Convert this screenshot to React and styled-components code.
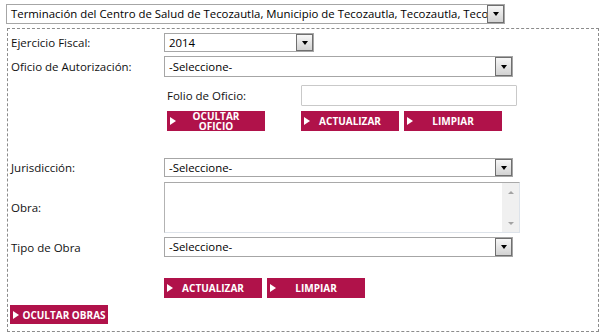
import React from "react";
import styled, { createGlobalStyle } from "styled-components";

const Global = createGlobalStyle`
  html, body { margin: 0; padding: 0; background: #fff; }
  body { font-family: "Open Sans", "Noto Sans", "DejaVu Sans", sans-serif; color: #111; }
  * { box-sizing: border-box; }
`;

const Page = styled.div`
  width: 604px;
  height: 336px;
  padding: 4px 0 0 6px;
  overflow: hidden;
`;

const SelectBox = styled.div`
  display: flex;
  align-items: stretch;
  width: ${(p) => p.$w}px;
  height: ${(p) => p.$h}px;
  border: 1px solid #a6a6a6;
  background: #fff;
  flex: none;
`;

const SelectValue = styled.div`
  flex: 1;
  min-width: 0;
  overflow: hidden;
  white-space: nowrap;
  padding-left: 4px;
  font-size: 11.4px;
  line-height: ${(p) => p.$h - 2}px;
  color: #000;
`;

const ArrowBox = styled.div`
  width: 17px;
  flex: none;
  border: 1px solid #6f6f6f;
  background: linear-gradient(#f7f7f7, #d2d2d2);
  display: flex;
  align-items: center;
  justify-content: center;
  &::after {
    content: "";
    width: 0;
    height: 0;
    border-left: 3.5px solid transparent;
    border-right: 3.5px solid transparent;
    border-top: 4px solid #000;
  }
`;

const Select = ({ value, w, h }) => (
  <SelectBox $w={w} $h={h}>
    <SelectValue $h={h}>{value}</SelectValue>
    <ArrowBox />
  </SelectBox>
);

const Frame = styled.div`
  margin: 4px 0 0 1px;
  width: 592px;
  height: 304px;
  border: 1px dashed #8c8c8c;
  padding: 0 0 0 3px;
  display: flex;
  flex-direction: column;
`;

const Row = styled.div`
  display: flex;
  align-items: center;
  margin-top: ${(p) => p.$mt}px;
  margin-left: ${(p) => p.$ml || 0}px;
  gap: ${(p) => p.$gap || 0}px;
`;

const Label = styled.div`
  width: ${(p) => p.$w || 153}px;
  flex: none;
  font-size: 11.5px;
  color: #111;
  white-space: nowrap;
`;

const TextInput = styled.div`
  width: 216px;
  height: 21px;
  border: 1px solid #c9c9c9;
  border-radius: 1px;
  background: #fff;
`;

const Area = styled.div`
  width: 356px;
  height: 51px;
  display: flex;
  border-top: 1px solid #a9a9a9;
  border-left: 1px solid #b3b3b3;
  border-right: 1px solid #dde3ea;
  border-bottom: 1px solid #dde3ea;
  background: #fff;
`;

const AreaBody = styled.div`
  flex: 1;
`;

const Scroll = styled.div`
  width: 17px;
  background: #f0f0f0;
  display: flex;
  flex-direction: column;
  justify-content: space-between;
  align-items: center;
  padding: 8px 0 7px;
`;

const ScrollArrow = styled.span`
  width: 0;
  height: 0;
  border-left: 3px solid transparent;
  border-right: 3px solid transparent;
  ${(p) => (p.$up ? "border-bottom: 3px solid #a3a3a3;" : "border-top: 3px solid #a3a3a3;")}
`;

const Button = styled.div`
  width: 98px;
  height: ${(p) => p.$h || 20}px;
  flex: none;
  background: #b0124a;
  color: #fff;
  display: grid;
  grid-template-columns: 14px minmax(0, 1fr) ${(p) => p.$end ?? 14}px;
  align-items: center;
  font-weight: 700;
  font-size: 10px;
  line-height: 10px;
  text-transform: uppercase;
  text-align: center;
`;

const BtnText = styled.span`
  justify-self: center;
  white-space: nowrap;
`;

const Tri = styled.span`
  margin-left: 3px;
  width: 0;
  height: 0;
  border-left: 6px solid #fff;
  border-top: 4.5px solid transparent;
  border-bottom: 4.5px solid transparent;
`;

const Btn = ({ children, end, h }) => (
  <Button $end={end} $h={h}>
    <Tri />
    <BtnText>{children}</BtnText>
    <span />
  </Button>
);

const Sub = styled.div`
  margin-left: 156px;
  display: flex;
  flex-direction: column;
`;

const Spacer = styled.div`
  width: ${(p) => p.$w}px;
  flex: none;
`;

export default function App() {
  return (
    <>
      <Global />
      <Page>
        <Select
          w={499}
          h={20}
          value="Terminación del Centro de Salud de Tecozautla, Municipio de Tecozautla, Tecozautla, Tecozautla, Hidalgo"
        />
        <Frame>
          <Row $mt={4}>
            <Label>Ejercicio Fiscal:</Label>
            <Select w={150} h={19} value="2014" />
          </Row>
          <Row $mt={4}>
            <Label>Oficio de Autorización:</Label>
            <Select w={349} h={21} value="-Seleccione-" />
          </Row>
          <Sub>
            <Row $mt={8}>
              <Label $w={134}>Folio de Oficio:</Label>
              <TextInput />
            </Row>
            <Row $mt={5}>
              <Btn>Ocultar<br />Oficio</Btn>
              <Spacer $w={36} />
              <Btn>Actualizar</Btn>
              <Spacer $w={5} />
              <Btn>Limpiar</Btn>
            </Row>
          </Sub>
          <Row $mt={27}>
            <Label>Jurisdicción:</Label>
            <Select w={349} h={19} value="-Seleccione-" />
          </Row>
          <Row $mt={5}>
            <Label>Obra:</Label>
            <Area>
              <AreaBody />
              <Scroll>
                <ScrollArrow $up />
                <ScrollArrow />
              </Scroll>
            </Area>
          </Row>
          <Row $mt={4}>
            <Label>Tipo de Obra</Label>
            <Select w={349} h={20} value="-Seleccione-" />
          </Row>
          <Row $mt={21} $ml={153} $gap={5}>
            <Btn>Actualizar</Btn>
            <Btn>Limpiar</Btn>
          </Row>
          <Row $mt={7} $ml={-1}>
            <Btn end={4} h={19}>Ocultar Obras</Btn>
          </Row>
        </Frame>
      </Page>
    </>
  );
}
